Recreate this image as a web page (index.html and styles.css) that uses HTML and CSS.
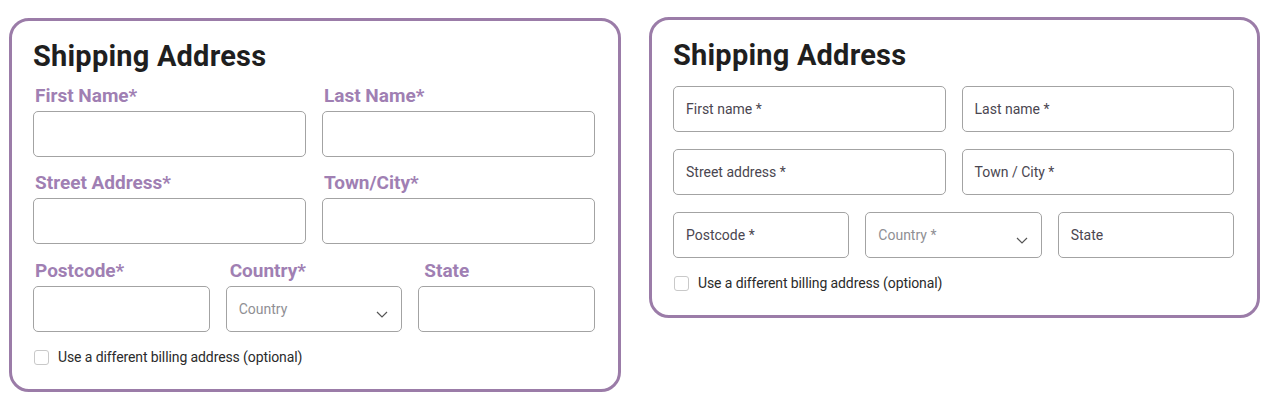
FILE: index.html
```html
<!DOCTYPE html>
<html lang="en">
<head>
<meta charset="utf-8">
<title>Shipping Address</title>
<link rel="stylesheet" href="styles.css">
</head>
<body>
<div class="page">
  <section class="card card-a">
    <h2 class="title">Shipping Address</h2>
    <div class="grid two rows-a">
      <div class="fld"><div class="lbl">First Name*</div><div class="box"></div></div>
      <div class="fld"><div class="lbl">Last Name*</div><div class="box"></div></div>
      <div class="fld"><div class="lbl">Street Address*</div><div class="box"></div></div>
      <div class="fld"><div class="lbl">Town/City*</div><div class="box"></div></div>
    </div>
    <div class="grid three rows-a gap-a">
      <div class="fld"><div class="lbl">Postcode*</div><div class="box"></div></div>
      <div class="fld"><div class="lbl shift">Country*</div><div class="box select"><span class="ph light">Country</span><svg class="chev" width="12" height="7" viewBox="0 0 12 7"><path d="M1 1l5 5 5-5" fill="none" stroke="#555" stroke-width="1.2"/></svg></div></div>
      <div class="fld"><div class="lbl shift2">State</div><div class="box"></div></div>
    </div>
    <label class="check"><span class="cb"></span><span>Use a different billing address (optional)</span></label>
  </section>

  <section class="card card-b">
    <h2 class="title">Shipping Address</h2>
    <div class="grid two rows-b">
      <div class="box"><span class="ph">First name *</span></div>
      <div class="box"><span class="ph">Last name *</span></div>
      <div class="box"><span class="ph">Street address *</span></div>
      <div class="box"><span class="ph">Town / City *</span></div>
    </div>
    <div class="grid three rows-b gap-b">
      <div class="box"><span class="ph">Postcode *</span></div>
      <div class="box select"><span class="ph light">Country *</span><svg class="chev" width="12" height="7" viewBox="0 0 12 7"><path d="M1 1l5 5 5-5" fill="none" stroke="#555" stroke-width="1.2"/></svg></div>
      <div class="box"><span class="ph">State</span></div>
    </div>
    <label class="check"><span class="cb"></span><span>Use a different billing address (optional)</span></label>
  </section>
</div>
</body>
</html>
```

FILE: styles.css
```css
* { box-sizing: border-box; }
html, body { margin: 0; padding: 0; background: #fff; }
body { font-family: Roboto, "Noto Sans", "Liberation Sans", sans-serif; color: #222; }

.page {
  display: flex;
  align-items: flex-start;
  gap: 28px;
  padding: 17px 0 0 9px;
}

.card {
  width: 612px;
  border: 3px solid #9b7ca8;
  border-radius: 20px;
  padding: 19px 23px 0 21px;
  background: #fff;
}
.card-a { margin-top: 1px; padding-bottom: 24px; }
.card-b { width: 611px; padding-bottom: 24px; }

.title {
  margin: 0;
  font-size: 29px;
  line-height: 32px;
  font-weight: 700;
  color: #1f1f1f;
  letter-spacing: 0.2px;
}

.grid { display: grid; column-gap: 16px; }
.two { grid-template-columns: 1fr 1fr; }
.three { grid-template-columns: 1fr 1fr 1fr; column-gap: 16px; }

.rows-a { row-gap: 15px; }
.card-a .title { margin-bottom: 13px; }
.gap-a { margin-top: 16px; }

.rows-b { row-gap: 17px; }
.card-b .title { margin-bottom: 15px; }
.gap-b { margin-top: 17px; }

.fld { display: flex; flex-direction: column; }
.lbl {
  font-size: 19px;
  line-height: 22px;
  font-weight: 700;
  color: #a07fb3;
  padding-left: 2px;
  margin-bottom: 4px;
}
.lbl.shift { padding-left: 4px; }
.lbl.shift2 { padding-left: 6px; }

.box {
  height: 46px;
  border: 1px solid #a3a3a3;
  border-radius: 5px;
  background: #fff;
  display: flex;
  align-items: center;
  padding: 0 12px;
  position: relative;
}
.ph { font-size: 14px; color: #4a4650; }
.ph.light { color: #8f8f94; }

.select { justify-content: space-between; }
.chev { margin-top: 10px; margin-right: 1px; }

.check {
  display: flex;
  align-items: center;
  gap: 9px;
  margin-top: 17px;
  padding-left: 1px;
  font-size: 14px;
  letter-spacing: -0.1px;
  color: #2b2b2b;
}
.cb {
  width: 15px;
  height: 15px;
  border: 1px solid #c9c9c9;
  border-radius: 3px;
  background: #fff;
}
```
